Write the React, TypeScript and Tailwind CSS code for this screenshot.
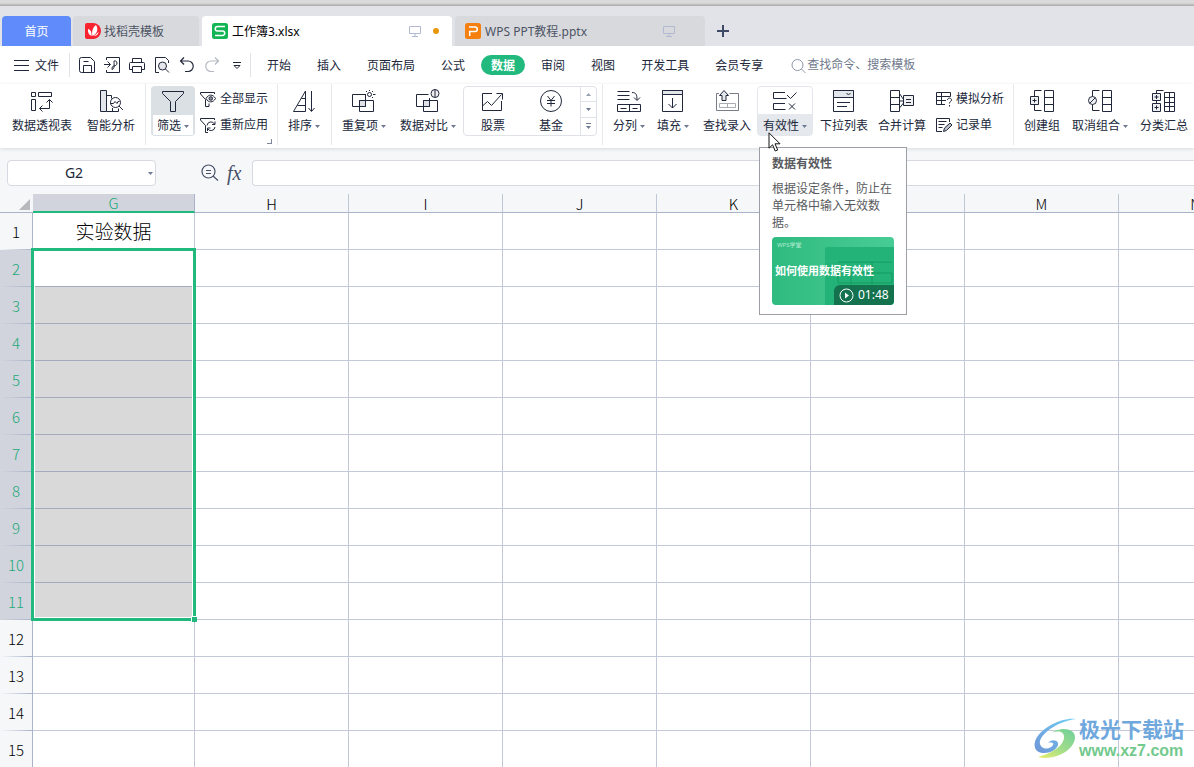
import type { ReactNode } from "react";
import clsx from "clsx";

const columns = ["G", "H", "I", "J", "K", "L", "M", "N"];
const rows = Array.from({ length: 15 }, (_, i) => i + 1);
const menus = ["开始", "插入", "页面布局", "公式", "数据", "审阅", "视图", "开发工具", "会员专享"];

function Icon({ size = 24, className, children }: { size?: number; className?: string; children: ReactNode }) {
  return (
    <svg
      width={size}
      height={size}
      viewBox={`0 0 ${size} ${size}`}
      fill="none"
      stroke="currentColor"
      className={clsx("shrink-0", className)}
      aria-hidden="true"
    >
      {children}
    </svg>
  );
}

function Caret({ className }: { className?: string }) {
  return (
    <svg width="5" height="3" viewBox="0 0 5 3" className={clsx("shrink-0 fill-[#6f7a92]", className)} aria-hidden="true">
      <path d="M0 0h5L2.5 3z" />
    </svg>
  );
}

const icons = {
  pivot: (
    <Icon>
      <path d="M1.5 3.5h4v4h-4zM8.5 3.5h13v4h-13zM1.5 10.5h4v11h-4zM9.5 19.5h10v-9M12.5 16.5l-3 3 3 3M16.5 13.5l3-3 3 3" />
    </Icon>
  ),
  analyse: (
    <Icon>
      <path d="M1.5 1.5h6v21h-6z" fill="#e3e6ea" />
      <path d="M7.5 6.5h5v3M7.5 22.5h12v-3M13.5 19v3.5" />
      <circle cx="16.5" cy="13.5" r="5" />
      <path d="M20 17l4 4M11 14.5h3.5l1.5-2 2 2 1-2h1.5" />
    </Icon>
  ),
  filter: (
    <Icon>
      <path d="M1.5 2.5h21v2l-8 8v10h-5v-10l-8-8z" />
    </Icon>
  ),
  showAll: (
    <Icon size={16}>
      <path d="M9 12.5v3H5.5v-7L.5 3V1.5h14V3" />
      <path d="M6 7.5c2.500-4.500 7-4.500 9.500 0-2.500 4.500-7 4.500-9.500 0z" fill="#fff" />
      <circle cx="10.800" cy="7.500" r="1.800" fill="#8b909b" />
    </Icon>
  ),
  reapply: (
    <Icon size={16}>
      <path d="M14.500 3V1.500H.5V3l5 5.500v7H8" />
      <path d="M7 8.500a4 4 0 0 1 7.500-1.500M15 4.500v3h-3M15 10a4 4 0 0 1-7.500 1.500M7.500 14v-3h3" />
    </Icon>
  ),
  sort: (
    <Icon>
      <path d="M13.500 2v20.500h-12zM9.500 9.500h4M5.500 16.500h8M19.500 2v20M16.500 19l3 3.500 3-3.500" />
    </Icon>
  ),
  duplicate: (
    <Icon>
      <path d="M7.500 11.500h6v6h-6z" fill="#dfe3e8" />
      <path d="M.5 5.500h13v12H.5zM7.500 11.500h14v11h-14z" />
      <circle cx="17.500" cy="5.500" r="2" />
      <path d="M17.500 1v1M13 5.500h1M21 5.500h2.500M14 2l1 1M21 2l-1 1M21 9l-1-1" />
    </Icon>
  ),
  compare: (
    <Icon>
      <path d="M7.500 11.500h6v6h-6z" fill="#dfe3e8" />
      <path d="M13.500 9v8.500H.5v-12h12M7.500 11.500h14v11h-14z" />
      <circle cx="19" cy="4.500" r="4" fill="#eef0f2" />
      <path d="M19 .5v8" />
    </Icon>
  ),
  stock: (
    <Icon>
      <path d="M11 4.500H1.500v17h19V12M1.500 17l5-4.500 4 4 10-11M15.500 4.500h6v6" />
    </Icon>
  ),
  fund: (
    <Icon>
      <circle cx="12" cy="12" r="10.500" />
      <path d="M8.500 7l3.500 4.500L15.500 7M12 11.500v6M8 11.500h8M8 14.500h8" />
    </Icon>
  ),
  split: (
    <Icon>
      <path d="M.5 2.500h12M.5 6.500h12M.5 10.500h12M15 3.500c4 0 5 2 5 7.500M17 8.500l3 3 3-3M.5 15.500h23v7H.5zM12.500 15.500v7M3.500 19.500h6M15.500 19.500h5" />
    </Icon>
  ),
  fill: (
    <Icon>
      <path d="M1.500 1.500h20v21h-20z" />
      <path d="M1.500 1.500h20v4h-20z" fill="#e3e6ea" />
      <path d="M11.500 9v10M7.500 15l4 4 4-4" />
    </Icon>
  ),
  lookup: (
    <Icon>
      <path d="M4 4.500H1.500v17h22v-17h-9" stroke="#777c87" />
      <path d="M4.500 14.500h16v4h-16zM12.500 14.500v4" stroke="#a9acb3" />
      <path d="M9 1.500l-4.500 5H7v5h4v-5h2.500z" fill="#e3e6ea" />
    </Icon>
  ),
  validity: (
    <Icon>
      <path d="M12 3.500H.5v6h13M12 14.500H.5v6h12M14 6l3.500 3.500 6-6M16 14.500l6 6M22 14.500l-6 6" />
    </Icon>
  ),
  dropdown: (
    <Icon>
      <path d="M1.500 1.500h20v21h-20z" />
      <path d="M1.500 1.500h20v7h-20z" fill="#e3e6ea" />
      <path d="M14.500 4l2 2 2-2M5 13.500h13M5 17.500h10" />
    </Icon>
  ),
  consolidate: (
    <Icon>
      <path d="M.5 1.500h9v21h-9zM.5 8.500h9M.5 15.500h9M9.500 4.500l4 6M9.500 19l4-5M9.500 12h4" />
      <path d="M13.500 6.500h10v10h-10z" fill="#eef0f2" />
      <path d="M16 10.500h5M16 13.500h5" />
    </Icon>
  ),
  whatIf: (
    <Icon size={16}>
      <path d="M9 13.500H.5v-12h14v4M.5 5.500h14M.5 9.500H10M5.500 1.500v12" />
      <path d="M11.500 9c0-2.500 4-2.500 4 0 0 1.500-2 1.500-2 3.500M13.500 14v1.500" />
    </Icon>
  ),
  form: (
    <Icon size={16}>
      <path d="M13.500 5V1.500H.5v13H6M2.500 4.500h8M2.500 7.500h6M2.500 10.500h4" />
      <path d="M7.500 14.500l1-3.500 5.500-5 2 2-5.500 5.500z" fill="#b9bdc5" />
    </Icon>
  ),
  group: (
    <Icon>
      <path d="M.5 7.500h8v8h-8z" fill="#eef0f2" />
      <path d="M2.500 11.500h4M4.500 9.500v4M4.500 7.500v-6h7M4.500 15.500v6h7M14.500 1.500h9v21h-9zM14.500 8.500h9M14.500 15.500h9" />
    </Icon>
  ),
  ungroup: (
    <Icon>
      <circle cx="4.500" cy="11.500" r="4" fill="#eef0f2" />
      <path d="M2 14l5-5M4.500 7.500v-6h7M4.500 15.500v6h7M14.500 1.500h9v21h-9zM14.500 8.500h9M14.500 15.500h9" />
    </Icon>
  ),
  subtotal: (
    <Icon>
      <path d="M.5 4.500h8v7h-8zM.5 14.500h8v8h-8z" fill="#eef0f2" />
      <path d="M4.500 4.500v-3h7M4.500 11.500v3M2.500 8h4M4.500 6v4M2.500 18.500h4M4.500 16.500v4M12.500 3.500h10v19h-10zM17.500 3.500v19M12.500 8.500h10M12.500 13.500h10M12.500 17.500h10" />
    </Icon>
  ),
};

function Tool({ icon, label, caret, className }: { icon: ReactNode; label: string; caret?: boolean; className?: string }) {
  return (
    <button type="button" className={clsx("flex h-[50px] shrink-0 flex-col items-center pt-[3px]", className)}>
      {icon}
      <span className="mt-[5px] flex items-center gap-[3px] leading-4 whitespace-nowrap">
        {label}
        {caret && <Caret />}
      </span>
    </button>
  );
}

function SmallTool({ icon, label }: { icon: ReactNode; label: string }) {
  return (
    <button type="button" className="flex h-[26px] items-center gap-1 whitespace-nowrap">
      {icon}
      {label}
    </button>
  );
}

function Divider({ className }: { className?: string }) {
  return <div className={clsx("-mt-0.5 h-[61px] w-px shrink-0 bg-[#e6e8ec]", className)} />;
}

function Monitor() {
  return (
    <Icon size={12} className="text-[#b1bad0]">
      <path d="M.5 1.500h11v7H.5zM6 8.500v3M3 11.500h6" />
    </Icon>
  );
}

function TabBar() {
  return (
    <div className="flex h-10 items-end bg-[#e1e3e8] pl-0.5">
      <button type="button" className="h-[30px] w-[69px] rounded-t-sm bg-[#5f8cfa] pt-0.5 text-white">
        首页
      </button>
      <button type="button" className="ml-0.5 flex h-[30px] w-[126px] items-center gap-[3px] rounded-t-sm bg-[#d8d9dc] pl-3 text-[#4d5465]">
        <svg width="16" height="16" viewBox="0 0 16 16" aria-hidden="true">
          <path d="M0 2a2 2 0 0 1 2-2h6a8 8 0 0 1 0 16H2a2 2 0 0 1-2-2z" fill="#f9222f" />
          <path d="M11 2c2 3 2.500 8-3.500 11C6.500 9 7.500 4.500 11 2zM3 6c2.500.5 4 3 3.500 7C4 12 2.500 9.500 3 6zM13.500 8.500c0 3-2 4.500-5 4.500 1.500-1 4-2 5-4.500z" fill="#fff" />
        </svg>
        <span className="pt-0.5">找稻壳模板</span>
      </button>
      <button type="button" className="ml-[3px] flex h-[30px] w-[250px] items-center rounded-t-sm bg-white pr-[13px] pl-2.5 text-black">
        <svg width="16" height="16" viewBox="0 0 16 16" aria-hidden="true">
          <rect width="16" height="16" rx="2.500" fill="#12b553" />
          <path d="M13 3.500H5.500a2.200 2.200 0 0 0 0 4.500h5a2.200 2.200 0 0 1 0 4.500H3" fill="none" stroke="#fff" strokeWidth="1.500" />
        </svg>
        <span className="ml-1 grow pt-0.5 text-left">工作簿3.xlsx</span>
        <Monitor />
        <span className="ml-3 size-1.5 rounded-full bg-[#e8970c]" />
      </button>
      <button type="button" className="ml-[3px] flex h-[30px] w-[250px] items-center rounded-t-sm bg-[#d8d9dc] pr-[30px] pl-2.5 text-[#4d5465]">
        <svg width="16" height="16" viewBox="0 0 16 16" aria-hidden="true">
          <rect width="16" height="16" rx="2.500" fill="#f5800f" />
          <path d="M4 4h6a2.300 2.300 0 0 1 0 4.600H4.700V13" fill="none" stroke="#fff" strokeWidth="1.500" />
        </svg>
        <span className="ml-1 grow pt-0.5 text-left">WPS PPT教程.pptx</span>
        <Monitor />
      </button>
      <button type="button" aria-label="新建" className="ml-3 flex h-[30px] items-center text-[#3f4b66]">
        <Icon size={12}>
          <path d="M6 0v12M0 6h12" strokeWidth="2" />
        </Icon>
      </button>
    </div>
  );
}

function MenuRow() {
  return (
    <div className="flex h-[38px] items-center pl-3.5">
      <button type="button" className="flex items-center gap-1.5">
        <Icon size={15}>
          <path d="M0 2.500h15M0 7.500h15M0 12.500h15" />
        </Icon>
        <span className="pt-0.5">文件</span>
      </button>
      <div className="ml-[10px] h-6 w-px bg-[#dfe2e7]" />
      <div className="ml-[9px] flex items-center gap-[9px]">
        <button type="button" aria-label="保存">
          <Icon size={16}>
            <path d="M2.500 .5h9l4 4v11h-13a2 2 0 0 1-2-2v-11a2 2 0 0 1 2-2zM4.500 15.500v-7h8v7M4.500 4.500h5" />
          </Icon>
        </button>
        <button type="button" aria-label="输出为PDF">
          <Icon size={16}>
            <path d="M2.500 3V.5h13v15h-13V13M0 7.500h6M3.500 4.500l3 3-3 3" />
            <path d="M8 12.500c3-1 2-5 2-8.500 4-1 4 5 0 5-1.500 0-2 1-2 3.500" />
          </Icon>
        </button>
        <button type="button" aria-label="打印">
          <Icon size={16}>
            <path d="M3.500 5V1.500h9V5M3.500 12.500h-3v-6a1 1 0 0 1 1-1h13a1 1 0 0 1 1 1v6h-3M3.500 9.500h9v6h-9z" />
          </Icon>
        </button>
        <button type="button" aria-label="打印预览">
          <Icon size={16}>
            <path d="M5 15.500H1.500V.5h10l3 3V6" />
            <circle cx="8.500" cy="9" r="4" fill="#e3e6ea" />
            <path d="M11.500 12l3.500 3.500" />
          </Icon>
        </button>
        <button type="button" aria-label="撤销">
          <Icon size={16}>
            <path d="M5 .5L1.500 4 5 7.500M1.500 4H9a5 5 0 0 1 0 10.500H6" strokeWidth="1.200" />
          </Icon>
        </button>
        <button type="button" aria-label="恢复" className="text-[#b5b9c2]">
          <Icon size={16}>
            <path d="M11 .5L14.500 4 11 7.500M14.500 4H7a5 5 0 0 0 0 10.500h3" strokeWidth="1.200" />
          </Icon>
        </button>
        <button type="button" aria-label="自定义快速访问工具栏">
          <Icon size={16}>
            <path d="M4 5.500h8M5 8.500l3 3 3-3z" />
          </Icon>
        </button>
      </div>
      <div className="ml-[5px] h-6 w-px bg-[#dfe2e7]" />
      <nav className="ml-1.5 flex items-center gap-1.5">
        {menus.map((menu) => (
          <button
            key={menu}
            type="button"
            className={clsx(
              "h-5 rounded-full px-2.5 pt-0.5 whitespace-nowrap",
              menu === "数据" && "bg-[#21b97d] font-bold text-white"
            )}
          >
            {menu}
          </button>
        ))}
      </nav>
      <label className="ml-[18px] flex grow items-center gap-px text-[#8f97a8]">
        <Icon size={15}>
          <circle cx="6.500" cy="7" r="5.500" />
          <path d="M10.500 11l4 4" />
        </Icon>
        <input
          type="text"
          aria-label="搜索"
          placeholder="查找命令、搜索模板"
          className="w-40 outline-none placeholder:text-[#70798c]"
        />
      </label>
    </div>
  );
}

function ValidityTip() {
  return (
    <div role="tooltip" className="absolute top-[61px] left-0.5 w-37 border border-[#9b9ea4] bg-white px-3 pt-2 pb-[9px] text-[#595b60]">
      <h2 className="leading-4 font-bold">数据有效性</h2>
      <p className="mt-2 leading-[17px]">根据设定条件，防止在单元格中输入无效数据。</p>
      <div className="relative mt-1.5 h-[68px] overflow-hidden rounded bg-linear-to-r from-[#2fbb80] to-[#48cc96]">
        <svg className="absolute inset-0" width="122" height="68" viewBox="0 0 122 68" aria-hidden="true">
          <rect x="53" y="10" width="80" height="70" rx="3" fill="#23b277" />
          <path d="M53 24h69" stroke="#28b97e" />
          <path d="M66 36h54v10H66zM79 36v32M100 25v36M66 25h54" fill="none" stroke="#159b62" />
        </svg>
        <div className="relative pt-1 pl-[5px] text-[6px] leading-2 text-[#b2ebd0]">WPS学堂</div>
        <div className="relative mt-3.5 pl-[3px] text-[11px] leading-4 font-bold whitespace-nowrap text-white">
          如何使用数据有效性
        </div>
        <button type="button" className="absolute right-0 bottom-0 flex h-5 w-15 items-center gap-1 rounded-tl-md rounded-br bg-[#14724f] pl-[5px] text-white">
          <Icon size={15}>
            <circle cx="7.500" cy="7.500" r="6.500" />
            <path d="M6 4.500v6l4-3z" fill="#fff" stroke="none" />
          </Icon>
          01:48
        </button>
      </div>
      <svg className="absolute -top-4 left-2" width="14" height="20" viewBox="0 0 14 20" aria-hidden="true">
        <path d="M1 .8v15.400l3.600-3.400 2.600 6.200 2.500-1-2.700-6.200h5z" fill="#fff" stroke="#111" />
      </svg>
    </div>
  );
}

function Ribbon() {
  return (
    <div className="relative z-20 flex h-16 items-start bg-white pt-0.5 shadow-[0_1px_4px_rgba(0,0,0,0.12)]">
      <Tool icon={icons.pivot} label="数据透视表" className="ml-2 w-17" />
      <Tool icon={icons.analyse} label="智能分析" className="ml-px w-17" />
      <Divider />

      <button
        type="button"
        className="ml-[5px] flex h-[50px] w-11 shrink-0 flex-col items-center justify-between rounded-sm bg-[#dbe0e5] p-px pt-[3px]"
      >
        {icons.filter}
        <span className="flex h-5 w-10 items-center justify-center gap-[3px] bg-white pt-0.5">
          筛选
          <Caret />
        </span>
      </button>
      <div className="ml-[5px] flex w-18 shrink-0 flex-col">
        <SmallTool icon={icons.showAll} label="全部显示" />
        <SmallTool icon={icons.reapply} label="重新应用" />
        <button type="button" aria-label="筛选选项" className="mt-px ml-auto size-[5px] border-r border-b border-[#7d879c]" />
      </div>
      <Divider className="ml-[5px]" />

      <Tool icon={icons.sort} label="排序" caret className="w-13" />
      <Divider className="ml-px" />

      <Tool icon={icons.duplicate} label="重复项" caret className="w-16" />
      <Tool icon={icons.compare} label="数据对比" caret className="w-16" />
      <div className="ml-[3px] flex h-[50px] w-[134px] shrink-0 rounded-sm border border-[#dfe2e7]">
        <Tool icon={icons.stock} label="股票" className="-mt-px w-[58px]" />
        <Tool icon={icons.fund} label="基金" className="-mt-px w-[58px]" />
        <div className="flex grow flex-col divide-y divide-[#dfe2e7] border-l border-[#dfe2e7]">
          <button type="button" aria-label="上一行" className="flex grow items-center justify-center">
            <Caret className="rotate-180 opacity-70" />
          </button>
          <button type="button" aria-label="下一行" className="flex grow items-center justify-center">
            <Caret />
          </button>
          <button type="button" aria-label="更多" className="flex grow flex-col items-center justify-center gap-0.5">
            <span className="h-px w-[5px] bg-[#6f7a92]" />
            <Caret />
          </button>
        </div>
      </div>
      <Divider className="ml-[5px]" />

      <Tool icon={icons.split} label="分列" caret className="ml-1 w-11" />
      <Tool icon={icons.fill} label="填充" caret className="w-11" />
      <Tool icon={icons.lookup} label="查找录入" className="ml-0.5 w-15" />
      <div className="relative shrink-0">
        <Tool
          icon={icons.validity}
          label="有效性"
          caret
          className="w-14 rounded-sm border border-[#e3e7ec] bg-linear-to-b from-white from-56% to-[#e5e9ee] to-56% !pt-0.5"
        />
        <ValidityTip />
      </div>
      <Tool icon={icons.dropdown} label="下拉列表" className="ml-[3px] w-14" />
      <Tool icon={icons.consolidate} label="合并计算" className="w-15" />
      <div className="ml-1 flex w-17 shrink-0 flex-col">
        <SmallTool icon={icons.whatIf} label="模拟分析" />
        <SmallTool icon={icons.form} label="记录单" />
      </div>
      <Divider className="ml-[9px]" />

      <Tool icon={icons.group} label="创建组" className="ml-1.5 w-11" />
      <Tool icon={icons.ungroup} label="取消组合" caret className="w-18" />
      <Tool icon={icons.subtotal} label="分类汇总" className="w-14" />
    </div>
  );
}

function FormulaBar() {
  return (
    <div className="flex h-[46px] items-start bg-[#f5f7f9] pt-3 pl-[7px]">
      <label className="flex h-[26px] w-[149px] items-center rounded-sm border border-[#d6d9df] bg-white pr-0.5">
        <input type="text" aria-label="名称框" defaultValue="G2" className="w-0 grow pr-2 text-center text-sm outline-none" />
        <Caret />
      </label>
      <div className="ml-[45px] flex h-[26px] w-[51px] items-center gap-2 text-[#475067]">
        <button type="button" aria-label="浏览公式结果">
          <Icon size={18}>
            <circle cx="7.500" cy="7.500" r="6.500" strokeWidth="1.200" />
            <path d="M12 12l5 4.500M5 6.500h5M5 9.500h5" strokeWidth="1.200" />
          </Icon>
        </button>
        <button type="button" aria-label="插入函数" className="font-['Liberation_Serif',serif] text-xl italic">
          fx
        </button>
      </div>
      <input type="text" aria-label="编辑栏" className="h-[26px] grow rounded-l-sm border border-r-0 border-[#d6d9df] bg-white px-2 text-sm outline-none" />
    </div>
  );
}

function Sheet() {
  return (
    <div className="relative grow overflow-hidden">
      <table className="w-[1273px] table-fixed border-separate border-spacing-0 font-['Noto_Sans_CJK_SC',sans-serif] text-[15px] font-light text-black">
        <colgroup>
          <col className="w-[33px]" />
          <col className="w-[162px]" />
          {columns.slice(1).map((name) => (
            <col key={name} className="w-[154px]" />
          ))}
        </colgroup>
        <thead>
          <tr className="h-[19px] bg-[#f5f7f9] leading-[17px]">
            <th className="border-b border-[#a9b3c9] p-0 pr-[3px] pb-0.5 align-bottom">
              <svg className="ml-auto" width="11" height="11" viewBox="0 0 11 11" aria-hidden="true">
                <path d="M11 0v11H0z" fill="#b7b9bd" />
              </svg>
            </th>
            {columns.map((name) => (
              <th
                key={name}
                scope="col"
                className={clsx(
                  "border-r p-0 font-light",
                  name === "G"
                    ? "border-r-[#a9b3c9] border-b-2 border-b-[#21b97d] bg-[#d1d4dc] text-[#21a978]"
                    : "border-b border-r-[#c0c7d8] border-b-[#a9b3c9]"
                )}
              >
                {name}
              </th>
            ))}
          </tr>
        </thead>
        <tbody>
          {rows.map((row) => {
            const selected = row >= 2 && row <= 11;
            return (
              <tr key={row} className="h-[37px]">
                <th
                  scope="row"
                  className={clsx(
                    "border-r border-[#a9b3c9] bg-[linear-gradient(to_right,transparent,#a9b3c9)] bg-[length:100%_1px] bg-bottom bg-no-repeat p-0 pt-px leading-5 font-light",
                    selected ? "bg-[#d1d4dc] text-[#21a978]" : "bg-[#f5f7f9]"
                  )}
                >
                  {row}
                </th>
                {columns.map((name) =>
                  name === "G" ? (
                    <td
                      key={name}
                      className={clsx(
                        "relative border-r border-b p-0 text-center text-[19px] leading-6",
                        selected ? "border-[#a4aabb]" : "border-[#c3c9d9]",
                        selected && row > 2 && "bg-[#d9d9d9]"
                      )}
                    >
                      {row === 1 && "实验数据"}
                      {row === 2 && (
                        <span className="absolute -top-0.5 -left-0.5 z-10 h-[373px] w-[165px] border-3 border-[#21b97d] outline-1 -outline-offset-4 outline-white">
                          <span className="absolute -right-1 -bottom-1 size-1.5 border-t border-l border-white bg-[#21b97d]" />
                        </span>
                      )}
                    </td>
                  ) : (
                    <td key={name} className="border-r border-b border-[#c3c9d9] p-0" />
                  )
                )}
              </tr>
            );
          })}
        </tbody>
      </table>

      <div className="absolute right-2.5 bottom-1.5 z-10 flex items-center gap-0.5 font-bold">
        <svg width="44" height="44" viewBox="0 0 44 44" aria-hidden="true">
          <defs>
            <linearGradient id="swoosh" x1="0" y1="1" x2="1" y2="0">
              <stop offset="0" stopColor="#6f94d6" />
              <stop offset="1" stopColor="#6fd0f5" />
            </linearGradient>
            <linearGradient id="leaf" x1="0" y1="1" x2="1" y2="0">
              <stop offset="0" stopColor="#e9ef6a" />
              <stop offset="0.500" stopColor="#9fdc8c" />
              <stop offset="1" stopColor="#6fcf9a" />
            </linearGradient>
          </defs>
          <path d="M43 2C30 0 9 10 3 22c-4 9 1 14 8 14 9 0 15-6 14-10-1-3-6-4-10 0 4-1 6 0 5 2-2 4-9 5-12 1C2 22 20 5 43 2z" fill="url(#swoosh)" />
          <path d="M14 19c7-6 17-6 17 1 0 9-12 16-26 20 15 4 37-6 37-20 0-9-16-12-28-1z" fill="url(#leaf)" />
        </svg>
        <div>
          <div className="text-[21px] leading-6 text-[#6fa8dd]">极光下载站</div>
          <div className="font-['Liberation_Sans',sans-serif] text-base leading-5 text-[#72c98d]">www.xz7.com</div>
        </div>
      </div>
    </div>
  );
}

export default function App() {
  return (
    <div className="flex h-screen flex-col overflow-hidden bg-white font-['Noto_Sans','Noto_Sans_CJK_SC',sans-serif] text-xs text-[#20273a]">
      <div className="h-1.5 shrink-0 bg-linear-to-b from-[#dadada] from-50% to-[#a6a6a8]" />
      <header className="shrink-0">
        <TabBar />
        <MenuRow />
        <Ribbon />
        <FormulaBar />
      </header>
      <Sheet />
    </div>
  );
}
